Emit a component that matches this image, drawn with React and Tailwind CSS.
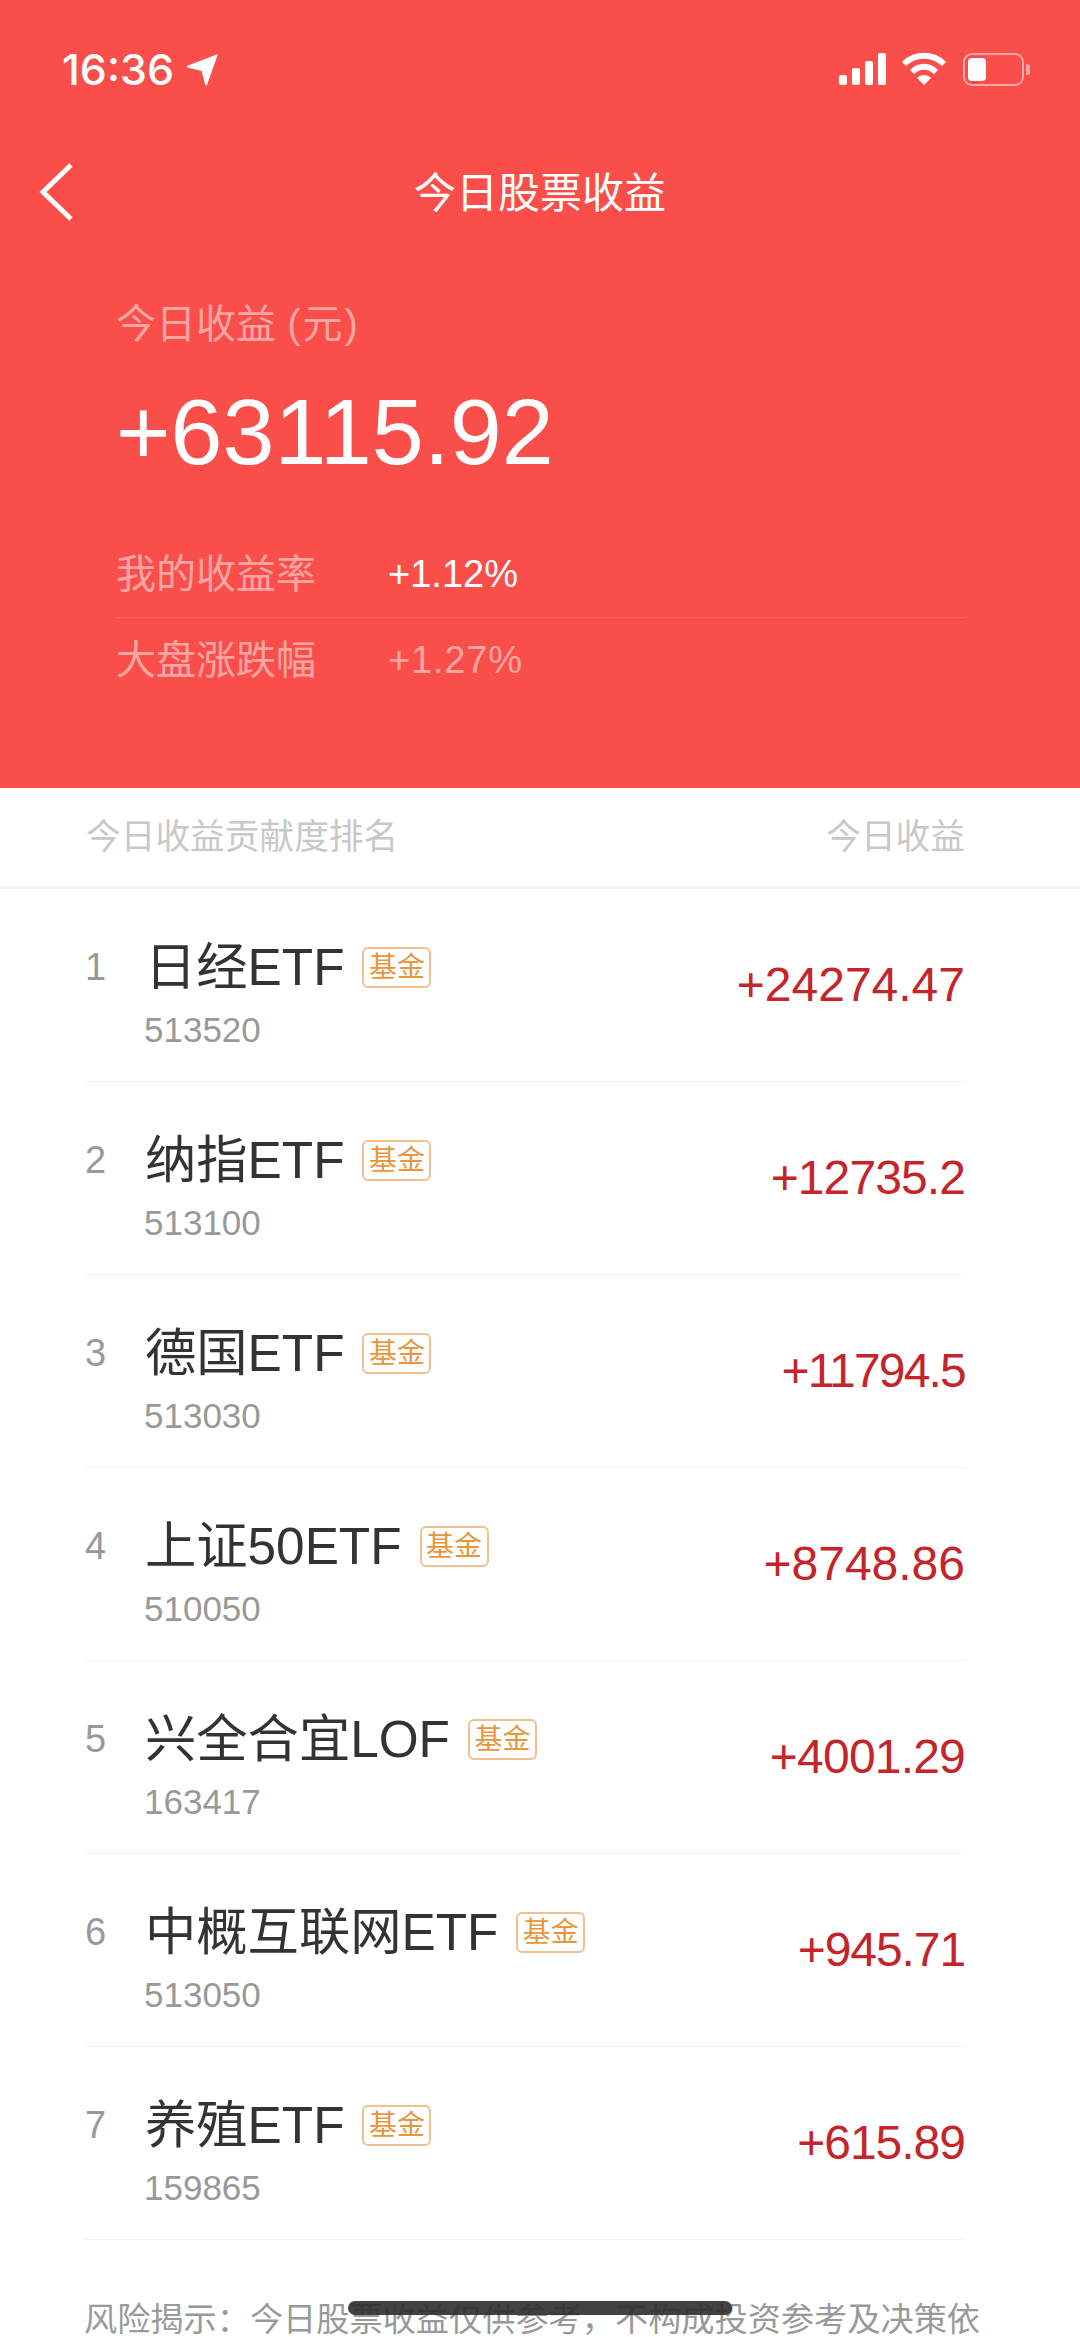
const FONT = '"Liberation Sans", "Noto Sans CJK SC", sans-serif';

// Figures in the app's numeric face run narrower around the digit 1, hence the per-row tracking.
const holdings = [
  { rank: 1, name: '日经ETF', code: '513520', gain: '+24274.47', fit: 'tracking-normal' },
  { rank: 2, name: '纳指ETF', code: '513100', gain: '+12735.2', fit: 'tracking-[-0.9px]' },
  { rank: 3, name: '德国ETF', code: '513030', gain: '+11794.5', fit: 'tracking-[-1.8px]' },
  { rank: 4, name: '上证50ETF', code: '510050', gain: '+8748.86', fit: 'tracking-normal' },
  { rank: 5, name: '兴全合宜LOF', code: '163417', gain: '+4001.29', fit: 'tracking-[-0.8px]' },
  { rank: 6, name: '中概互联网ETF', code: '513050', gain: '+945.71', fit: 'tracking-[-1.1px]' },
  { rank: 7, name: '养殖ETF', code: '159865', gain: '+615.89', fit: 'tracking-[-1px]' },
];

function StatusBar() {
  return (
    <div className="flex h-[136px] items-center justify-between pl-[62px] pr-[50px] pt-[2px] text-white">
      <div className="flex items-center gap-[12px]">
        <span className="font-['Inter'] text-[43px] leading-[44px] font-medium">16:36</span>
        <svg width="33" height="33" viewBox="0 0 33 33" fill="#fff">
          <path d="M32 1 L21 32 Q20 33 19 31 L15.5 18 L1.5 14.5 Q0 13.5 2 12.5 Z" />
        </svg>
      </div>
      <div className="flex items-center">
        <svg width="48" height="32" viewBox="0 0 48 32" fill="#fff" className="mr-[14px]">
          <rect x="0" y="22" width="8" height="10" rx="2" />
          <rect x="13" y="15" width="8" height="17" rx="2" />
          <rect x="26" y="8" width="8" height="24" rx="2" />
          <rect x="39" y="0" width="8" height="32" rx="2" />
        </svg>
        <svg width="46" height="34" viewBox="0 0 46 34" fill="none" stroke="#fff" strokeWidth="6" className="mr-[16px]">
          <path d="M3 12 C14 1 32 1 43 12" />
          <path d="M11 20 C18 13 28 13 35 20" />
          <path d="M23 33 L16 26 C20 22 26 22 30 26 Z" fill="#fff" stroke="none" />
        </svg>
        <div className="flex items-center">
          <div className="flex h-[33px] w-[61px] items-center rounded-[9px] border-2 border-white/50 p-[3px]">
            <div className="h-[23px] w-[18px] rounded-[4px] bg-white" />
          </div>
          <div className="ml-[2px] h-[11px] w-[4px] rounded-r-[3px] bg-white/50" />
        </div>
      </div>
    </div>
  );
}

function NavBar() {
  return (
    <div className="relative flex h-[118px] items-center justify-center pb-[3px]">
      <svg width="36" height="58" viewBox="0 0 36 58" fill="none" stroke="#fff" strokeWidth="5" className="absolute left-[38px] top-[27px]">
        <path d="M33 2 L5 29 L33 56" />
      </svg>
      <span className="text-[42px] leading-[50px] text-white">今日股票收益</span>
    </div>
  );
}

function StatLine({ label, value, valueClass }) {
  return (
    <div className="flex h-[60px] items-center">
      <span className="w-[272px] text-[40px] leading-[50px] text-white/50">{label}</span>
      <span className={`text-[38px] leading-[50px] ${valueClass}`}>{value}</span>
    </div>
  );
}

function Summary() {
  return (
    <div className="h-[788px] bg-[#f94e4a]">
      <StatusBar />
      <NavBar />
      <div className="pl-[116px] pr-[115px]">
        <div className="mt-[45px] text-[40px] leading-[50px] text-white/50">
          今日收益 <span className="tracking-[2px]">(元)</span>
        </div>
        <div className="mt-[33px] text-[93.5px] leading-[100px] text-white">+63115.92</div>
        <div className="mt-[62px] border-b border-white/15 pb-[13px]">
          <StatLine label="我的收益率" value="+1.12%" valueClass="text-white" />
        </div>
        <div className="mt-[12px]">
          <StatLine label="大盘涨跌幅" value="+1.27%" valueClass="tracking-[0.8px] text-white/50" />
        </div>
      </div>
    </div>
  );
}

function Row({ item }) {
  return (
    <div className="flex h-[193px] items-center border-b border-[#f2f2f2]">
      <div className="flex-1 pt-[18px]">
        <div className="flex h-[60px] items-center pb-[2px]">
          <span className="w-[60px] pb-[1px] text-[38px] text-[#999]">{item.rank}</span>
          <span className="text-[51.3px] leading-[58px] text-[#333]">{item.name}</span>
          <span className="ml-[18px] flex h-[41px] w-[69px] items-center justify-center rounded-[6px] border-2 border-[#f0c093] text-[28px] leading-none text-[#e8963c]">
            基金
          </span>
        </div>
        <div className="mt-[11px] pl-[59px] text-[35px] leading-[40px] text-[#999]">{item.code}</div>
      </div>
      <div className={`text-[48px] leading-[60px] text-[#c4242a] ${item.fit}`}>{item.gain}</div>
    </div>
  );
}

export default function App() {
  return (
    <div className="relative h-[2337px] w-[1080px] overflow-hidden bg-white" style={{ fontFamily: FONT }} lang="zh-CN">
      <Summary />
      <div className="flex h-[101px] items-center justify-between border-b-[3px] border-[#f4f4f4] pl-[86px] pr-[115px] text-[34.7px] text-[#c8c8c8]">
        <span>今日收益贡献度排名</span>
        <span>今日收益</span>
      </div>
      <div className="pl-[85px] pr-[115px]">
        {holdings.map((item) => (
          <Row key={item.rank} item={item} />
        ))}
      </div>
      <p className="mt-[60px] pl-[84px] pr-[90px] text-[33.2px] leading-[40px] text-[#999]">
        风险揭示：今日股票收益仅供参考，不构成投资参考及决策依据。
      </p>
      {/* Home indicator overlays the scrolling page */}
      <div className="absolute left-[348px] top-[2301px] h-[14px] w-[384px] rounded-full bg-[#2e2e2e]/90" />
    </div>
  );
}
